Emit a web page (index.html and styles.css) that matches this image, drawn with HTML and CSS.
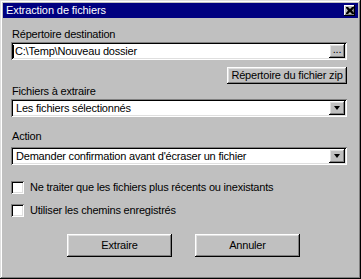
FILE: index.html
```html
<!DOCTYPE html>
<html lang="fr">
<head>
    <meta charset="UTF-8">
    <title>Extraction de fichiers</title>
    <link rel="stylesheet" href="styles.css">
</head>
<body>
    <div class="window">
        <div class="titlebar">
            <span class="title">Extraction de fichiers</span>
            <span class="close">
                <svg width="8" height="7" viewBox="0 0 8 7">
                    <path d="M0 0h2l2 2 2-2h2v1l-2 2.5 2 2.5v1h-2l-2-2-2 2h-2v-1l2-2.5-2-2.5z" fill="#000"/>
                </svg>
            </span>
        </div>
        <div class="content">
            <div class="label first">Répertoire destination</div>
            <div class="field">
                <span class="caret"></span>
                <span class="value">C:\Temp\Nouveau dossier</span>
                <span class="btn small">...</span>
            </div>
            <div class="right-row">
                <span class="btn zip">Répertoire du fichier zip</span>
            </div>
            <div class="label">Fichiers à extraire</div>
            <div class="field combo">
                <span class="value">Les fichiers sélectionnés</span>
                <span class="btn arrow"><span class="tri"></span></span>
            </div>
            <div class="label action">Action</div>
            <div class="field combo second">
                <span class="value">Demander confirmation avant d'écraser un fichier</span>
                <span class="btn arrow"><span class="tri"></span></span>
            </div>
            <div class="check first-check">
                <span class="box"></span>
                <span>Ne traiter que les fichiers plus récents ou inexistants</span>
            </div>
            <div class="check">
                <span class="box"></span>
                <span>Utiliser les chemins enregistrés</span>
            </div>
            <div class="actions">
                <span class="btn big">Extraire</span>
                <span class="btn big">Annuler</span>
            </div>
        </div>
    </div>
</body>
</html>
```

FILE: styles.css
```css
body {
    margin: 0;
    background-color: #c0c0c0;
    font-family: 'Liberation Sans', Arial, sans-serif;
    font-size: 11px;
    line-height: 13px;
    color: #000;
}
.window {
    width: 361px;
    height: 279px;
    box-sizing: border-box;
    padding: 3px;
    background-color: #c0c0c0;
    box-shadow: inset -1px -1px #000, inset 1px 1px #dfdfdf, inset -2px -2px #808080, inset 2px 2px #fff;
    display: flex;
    flex-direction: column;
}
.titlebar {
    height: 15px;
    background-color: #000080;
    color: #fff;
    display: flex;
    align-items: center;
    justify-content: space-between;
    padding: 0 3px 0 3px;
}
.title {
    font-size: 11px;
    letter-spacing: -0.1px;
}
.close {
    width: 11px;
    height: 11px;
    background-color: #c0c0c0;
    box-shadow: inset -1px -1px #000, inset 1px 1px #fff, inset -2px -2px #808080;
    display: flex;
    align-items: center;
    justify-content: center;
}
.content {
    padding: 0 11px 0 8px;
    display: flex;
    flex-direction: column;
}
.label {
    padding-left: 1px;
    margin-top: 1px;
    letter-spacing: -0.2px;
}
.label.first {
    margin-top: 10px;
}
.label.action {
    margin-top: 13px;
}
.field {
    margin-top: 1px;
    height: 18px;
    box-sizing: border-box;
    padding: 2px;
    background-color: #fff;
    box-shadow: inset 1px 1px #808080, inset -1px -1px #fff, inset 2px 2px #000, inset -2px -2px #dfdfdf;
    display: flex;
    align-items: center;
}
.field .value {
    flex: 1;
    letter-spacing: -0.2px;
}
.caret {
    width: 1px;
    height: 13px;
    background-color: #000;
    margin: 0 1px 0 0;
}
.field.combo .value {
    padding-left: 3px;
}
.field.second {
    margin-top: 4px;
}
.btn {
    background-color: #c0c0c0;
    box-shadow: inset -1px -1px #000, inset 1px 1px #fff, inset -2px -2px #808080, inset 2px 2px #dfdfdf;
    display: flex;
    align-items: center;
    justify-content: center;
    box-sizing: border-box;
    letter-spacing: -0.2px;
}
.btn.small {
    width: 16px;
    height: 14px;
    padding-bottom: 3px;
}
.btn.arrow {
    width: 16px;
    height: 14px;
}
.tri {
    width: 0;
    height: 0;
    border-left: 3.5px solid transparent;
    border-right: 3.5px solid transparent;
    border-top: 4px solid #000;
}
.right-row {
    display: flex;
    justify-content: flex-end;
    margin-top: 7px;
}
.btn.zip {
    width: 120px;
    height: 17px;
}
.check {
    display: flex;
    align-items: center;
    gap: 6px;
    margin-top: 10px;
    letter-spacing: -0.2px;
}
.check.first-check {
    margin-top: 16px;
}
.box {
    flex-shrink: 0;
    width: 13px;
    height: 13px;
    background-color: #fff;
    box-shadow: inset 1px 1px #808080, inset -1px -1px #fff, inset 2px 2px #000, inset -2px -2px #dfdfdf;
}
.actions {
    display: flex;
    justify-content: center;
    gap: 23px;
    margin-top: 17px;
    padding-left: 9px;
}
.btn.big {
    width: 105px;
    height: 23px;
}
```
